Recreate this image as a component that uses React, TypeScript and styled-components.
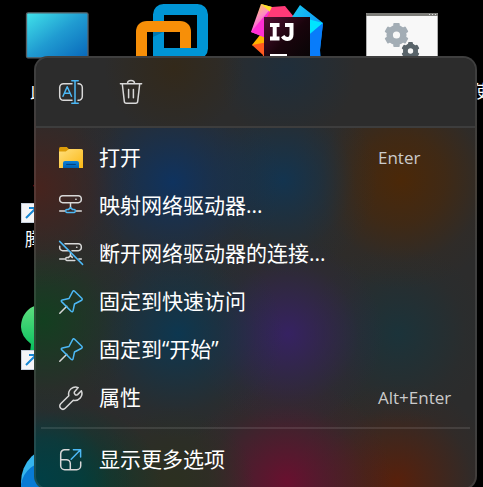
import React from "react";
import styled, { createGlobalStyle } from "styled-components";

const GlobalStyle = createGlobalStyle`
  *, *::before, *::after { box-sizing: border-box; }
  html, body { margin: 0; background: #000; }
  body { overflow: hidden; font-family: "Open Sans", "Noto Sans CJK SC", sans-serif; }
`;

const Desktop = styled.main`
  position: relative;
  min-height: 100vh;
  overflow: hidden;
  background: #000;
  color: #fff;
`;

const Shortcut = styled.div<{ $x: number; $y: number }>`
  position: absolute;
  left: ${(p) => p.$x}px;
  top: ${(p) => p.$y}px;
  width: 72px;
  display: flex;
  flex-direction: column;
  align-items: center;
  gap: 1px;
  svg { display: block; flex: none; overflow: visible; }
`;

const ShortcutLabel = styled.span`
  font-size: 18px;
  line-height: 24px;
  white-space: nowrap;
`;

const Menu = styled.div`
  position: absolute;
  left: 34px;
  right: 6px;
  top: 56px;
  overflow: hidden;
  border: 2px solid rgba(255, 255, 255, 0.09);
  border-radius: 14px;
  background:
    radial-gradient(circle 100px at 4px 132px, #48231df5, #48231d70 45%, #48231d18 75%, #48231d00),
    radial-gradient(circle 110px at 139px 126px, #0f335f, #0f335f80 42%, #0f335f1c 75%, #0f335f00),
    radial-gradient(circle 95px at 249px 124px, #13344f, #13344f80 42%, #13344f1c 75%, #13344f00),
    radial-gradient(circle 110px at 367px 124px, #4b2808, #4b2808a0 40%, #4b28081c 75%, #4b280800),
    radial-gradient(circle 95px at 9px 264px, #133f20, #133f2080 42%, #133f201c 75%, #133f2000),
    radial-gradient(circle 105px at 144px 278px, #0d3750, #0d375080 42%, #0d37501c 75%, #0d375000),
    radial-gradient(circle 95px at 254px 278px, #362262, #36226280 42%, #3622621c 75%, #36226200),
    radial-gradient(circle 90px at 364px 278px, #1b333a, #1b333a80 42%, #1b333a1c 75%, #1b333a00),
    radial-gradient(circle 95px at 4px 425px, #003f45, #003f45a0 45%, #003f451c 75%, #003f4500),
    radial-gradient(circle 80px at 48px 430px, #0b3a2c, #0b3a2c90 45%, #0b3a2c00),
    radial-gradient(circle 80px at 140px 430px, #2c3020, #2c302090 50%, #2c302000),
    radial-gradient(circle 105px at 253px 426px, #69102f, #69102f80 42%, #69102f1c 75%, #69102f00),
    radial-gradient(circle 100px at 363px 426px, #58200b, #58200b80 42%, #58200b1c 75%, #58200b00),
    #2c2c2c;
  background-origin: border-box;
`;

const Toolbar = styled.div`
  display: flex;
  gap: 12px;
  padding: 10px 11px;
  border-bottom: 2px solid #3d3d3d;
  background:
    radial-gradient(circle 70px at 138px 10px, #33291a, #33291a00),
    radial-gradient(circle 70px at 250px 12px, #1f2e3b, #1f2e3b00),
    #2c2c2c;
`;

const IconButton = styled.button`
  display: grid;
  place-items: center;
  width: 48px;
  height: 48px;
  padding: 0;
  border: 0;
  border-radius: 6px;
  background: transparent;
  &:hover { background: rgba(255, 255, 255, 0.08); }
`;

const Items = styled.div`
  display: flex;
  flex-direction: column;
  padding: 6px 5px 4px;
`;

const Item = styled.button`
  display: grid;
  grid-template-columns: 24px 1fr 92px;
  column-gap: 16px;
  align-items: center;
  height: 48px;
  padding: 0 0 0 18px;
  border: 0;
  border-radius: 6px;
  background: transparent;
  color: #fff;
  font: inherit;
  font-size: 21px;
  line-height: 28px;
  text-align: left;
  white-space: nowrap;
  &:hover { background: rgba(255, 255, 255, 0.08); }
`;

const ItemLabel = styled.span`
  padding-bottom: 2px;
`;

const Keys = styled.kbd`
  font-family: "Open Sans", sans-serif;
  font-size: 17px;
  line-height: 24px;
  color: #cbcbcb;
`;

const Divider = styled.hr`
  width: 100%;
  height: 2px;
  margin: 5px 0 7px;
  border: 0;
  background: rgba(255, 255, 255, 0.1);
`;

const Glyph = styled.svg`
  display: block;
  width: 24px;
  height: 24px;
  overflow: visible;
  fill: none;
  stroke: #d8d8d8;
  stroke-width: 1.5;
  stroke-linecap: round;
  stroke-linejoin: round;
  .accent { stroke: #4cb8f5; }
`;

const RenameIcon = () => (
  <Glyph viewBox="0 0 24 24" aria-hidden="true">
    <path d="M13 3.7H4.5A3.8 3.8 0 0 0 .7 7.5v9a3.8 3.8 0 0 0 3.8 3.8H13M19 3.7h.5a3.8 3.8 0 0 1 3.8 3.8v9a3.8 3.8 0 0 1-3.8 3.8H19" />
    <path className="accent" d="M4 16.2 8.2 6.7l4.3 9.5M5.4 13.2h5.6M16 .8v22.5M12.8.8h6.4M12.8 23.3h6.4" />
  </Glyph>
);

const DeleteIcon = () => (
  <Glyph viewBox="0 0 24 24" aria-hidden="true">
    <path d="M1.4 3.8h21.2M8.5 3.4a3.5 3 0 0 1 7 0M3.3 4l2 17.3a2 2 0 0 0 2 1.9h9.4a2 2 0 0 0 2-1.9L20.7 4M9.6 9.5v8.2M14.4 9.5v8.2" />
  </Glyph>
);

const FolderIcon = () => (
  <Glyph viewBox="0 0 24 24" aria-hidden="true">
    <defs>
      <linearGradient id="folder" x1="0" y1="0" x2="1" y2="1">
        <stop offset="0" stopColor="#ffdf7d" />
        <stop offset="1" stopColor="#fbb814" />
      </linearGradient>
      <linearGradient id="folderBase" x1="0" y1="0" x2="0" y2="1">
        <stop offset="0" stopColor="#0d80d8" />
        <stop offset="1" stopColor="#0061b3" />
      </linearGradient>
    </defs>
    <g stroke="none">
      <path fill="#dd9c08" d="M0 3q0-2 1.5-2h6.3l2 2H22v3H0z" />
      <path fill="url(#folder)" d="M0 5.6h6.8L10 3h12.5Q24 3 24 4.5V22H0z" />
      <path fill="url(#folderBase)" d="M4 22v-5q0-2 2-2h12q2 0 2 2v5z" />
    </g>
    <path d="M7.6 18.4h8.8" stroke="#063e78" strokeWidth="1" />
  </Glyph>
);

const MapDriveIcon = () => (
  <Glyph viewBox="0 0 24 24" aria-hidden="true">
    <path d="M3.7 1.7h15.6a3 3 0 0 1 3 3v1a3 3 0 0 1-3 3H3.7a3 3 0 0 1-3-3v-1a3 3 0 0 1 3-3zM16.8 5.2h.3M11.5 9v4.5M.7 17h5M17.3 17h5" />
    <path className="accent" d="M9.3 15.6 11.5 13.6l2.2 2h1.6q1 0 1 1.4t-1 1.4H7.7q-1 0-1-1.4t1-1.4z" />
  </Glyph>
);

const DisconnectDriveIcon = () => (
  <Glyph viewBox="0 0 24 24" aria-hidden="true">
    <path d="M6 1.7h13.3a3 3 0 0 1 3 3v1a3 3 0 0 1-3 3H13M9.4 8.7H3.7a3 3 0 0 1-3-3V4.2M17.6 5.2h.3M11.5 10.500v3M.7 17h5M9.3 15.6l2.2-2 1.8 1.8M15.8 18.4H7.7q-1 0-1-1.4t1-1.4h1.6M19.8 17h2.5" />
    <path className="accent" d="m.6-.6 23 23" />
  </Glyph>
);

const PinIcon = () => (
  <Glyph viewBox="0 0 24 24" aria-hidden="true">
    <path d="m.8 23.2 7-7" />
    <path className="accent" d="M15.6 1.2 22.8 8.3q1.1 1.3-.6 2.2l-6.7 3.5-1.4 6.6q-.5 2-2 .6L2.8 11.9q-1.3-1.4.6-2l6.6-1.4 3.5-6.7q.9-1.7 2.1-.6z" />
  </Glyph>
);

const WrenchIcon = () => (
  <Glyph viewBox="0 0 24 24" aria-hidden="true">
    <path d="M19.2 1.6A7 7 0 0 0 9.8 9.7L1.7 17.8a3 3 0 0 0 4.5 4.5l8.1-8.1a7 7 0 0 0 8.1-9.4l-3.8 3.8q-1.5 1-2.6-.2-1.2-1.2-.6-2.5z" />
  </Glyph>
);

const MoreIcon = () => (
  <Glyph viewBox="0 0 24 24" aria-hidden="true">
    <path d="M10 1.700H5.700a4 4 0 0 0-4 4v12a4 4 0 0 0 4 4h12a4 4 0 0 0 4-4V14M1.700 11.700h5.600a4 4 0 0 1 4 4v6" />
    <path className="accent" d="m12.200 11.200 9.300-9.400M14.400 1.700h7.200v7.200" />
  </Glyph>
);

const MonitorArt = () => (
  <svg width="64" height="66" viewBox="0 0 64 66" aria-hidden="true">
    <defs>
      <linearGradient id="screen" x1="0" y1="0" x2="1" y2="1">
        <stop offset="0" stopColor="#41e3ea" />
        <stop offset=".5" stopColor="#209bd1" />
        <stop offset="1" stopColor="#0867ba" />
      </linearGradient>
    </defs>
    <rect x="1.500" y=".8" width="61.500" height="45" rx="1.5" fill="url(#screen)" stroke="#596066" strokeWidth="1.3" />
  </svg>
);

const BoxesArt = () => (
  <svg width="72" height="72" viewBox="0 0 72 72" aria-hidden="true">
    <rect x="22.5" y="5.5" width="44" height="44" rx="5" fill="none" stroke="#0095d5" strokeWidth="11" />
    <path fill="none" stroke="#f78f08" strokeWidth="11" d="M5.5 66V28q0-5.500 5.500-5.500h33q5.500 0 5.500 5.500v16" />
    <path fill="#0095d5" d="M17 44h44v11H17z M17 28h11v16H17z" />
    <path fill="#0077ae" d="M17 28h10.500L17 33z" />
  </svg>
);

const IdeaArt = () => (
  <svg width="72" height="72" viewBox="0 0 72 72" aria-hidden="true">
    <defs>
      <linearGradient id="ideaPink" x1="0" y1="0" x2=".4" y2="1">
        <stop offset="0" stopColor="#ffd93b" />
        <stop offset=".45" stopColor="#ff8fc0" />
        <stop offset="1" stopColor="#f629e9" />
      </linearGradient>
      <linearGradient id="ideaBlue" x1="0" y1="0" x2="1" y2="1">
        <stop offset="0" stopColor="#18c9f1" />
        <stop offset="1" stopColor="#087cfa" />
      </linearGradient>
      <linearGradient id="ideaDark" x1="0" y1="0" x2="1" y2="1">
        <stop offset="0" stopColor="#531034" />
        <stop offset=".5" stopColor="#19040c" />
        <stop offset="1" stopColor="#050505" />
      </linearGradient>
    </defs>
    <path fill="#ffb300" d="m1 41 8-10 6 2v16z" />
    <path fill="#ff5a20" d="m1 41 16-3v26L11 56l1-5z" />
    <path fill="url(#ideaPink)" d="m10 0 11 3-6 31L0 28z" />
    <path fill="#ff2ed3" d="m0 28 21-25 4 34-11-4z" />
    <path fill="#ffdf28" d="M10 0 21 3 19 8z" />
    <path fill="#ff3b78" d="m21 3 13-1 9 11-4 8-25-4z" />
    <path fill="url(#ideaBlue)" d="M49 1 72 19l-3 27 1 18H45L41 13z" />
    <path fill="#00e5ff" d="m49 13 23 6-17 14z" />
    <path fill="#087cfa" d="m58 31 14-12-3 27 1 18H56z" />
    <rect x="13" y="13" width="46" height="46" fill="url(#ideaDark)" />
    <path fill="none" stroke="#fff" strokeWidth="4" d="M19 21h9.500M23.700 20v16M19 34.500h9.500M34 21h6.500v9.500q0 4.500-4 4.500-3 0-4.800-2.800" />
    <path fill="#fff" d="M19 50h17v3H19z" />
  </svg>
);

const gearTeeth = [0, 60, 120, 180, 240, 300];

const Gear = ({ x, y, r, color }: { x: number; y: number; r: number; color: string }) => (
  <g transform={`translate(${x} ${y})`}>
    <circle r={r * 0.57} fill="none" stroke={color} strokeWidth={r * 0.54} />
    {gearTeeth.map((a) => (
      <rect key={a} x={-r * 0.27} y={-r} width={r * 0.54} height={r * 0.4} rx="1" fill={color} transform={`rotate(${a})`} />
    ))}
  </g>
);

const GearWindowArt = () => (
  <svg width="72" height="64" viewBox="0 0 72 64" aria-hidden="true">
    <rect width="72" height="60" rx="1" fill="#f8f8f8" />
    <path fill="#7d7d79" d="M0 1q0-1 1-1h70q1 0 1 1v2H0z" />
    <path fill="#d8d8d8" d="M63 1h1v1h-1zM66 1h1v1h-1zM69 1h1v1h-1z" />
    <path fill="none" stroke="#b0b0b0" d="M.5 3v57M71.500 3v57" />
    <Gear x={30.5} y={22} r={12} color="#a3adb5" />
    <Gear x={44.5} y={38} r={9} color="#59646a" />
  </svg>
);

const Badge = () => (
  <g>
    <rect x=".5" y="37.500" width="20" height="19" fill="#f4f5f8" stroke="#c5cedb" />
    <path d="m5 52 9-9M8 42h8v8" fill="none" stroke="#1686d3" strokeWidth="2" />
  </g>
);

const PenguinArt = () => (
  <svg width="72" height="60" viewBox="0 0 72 60" aria-hidden="true">
    <path fill="#d91424" d="M12 20q4-4 15-3v8z" />
    <Badge />
  </svg>
);

const ChatArt = () => (
  <svg width="72" height="60" viewBox="0 0 72 60" aria-hidden="true">
    <defs>
      <linearGradient id="chat" x1="0" y1="0" x2="0" y2="1">
        <stop offset="0" stopColor="#62df80" />
        <stop offset="1" stopColor="#05bf5d" />
      </linearGradient>
    </defs>
    <path fill="url(#chat)" d="M24-9C8-9 0 2 0 14q0 9 10 17l-1 8 12-5q22 4 28-19Q48-9 24-9z" />
    <Badge />
  </svg>
);

const BrowserArt = () => (
  <svg width="72" height="72" viewBox="0 0 72 72" aria-hidden="true">
    <circle cx="36" cy="36" r="36" fill="#35b5ed" />
    <path fill="#087bd4" d="M0 38q4-20 28-23v57Q2 66 0 38z" />
  </svg>
);

const entries = [
  { label: "打开", icon: <FolderIcon />, keys: "Enter" },
  { label: "映射网络驱动器...", icon: <MapDriveIcon /> },
  { label: "断开网络驱动器的连接...", icon: <DisconnectDriveIcon /> },
  { label: "固定到快速访问", icon: <PinIcon /> },
  { label: "固定到“开始”", icon: <PinIcon /> },
  { label: "属性", icon: <WrenchIcon />, keys: "Alt+Enter" },
];

export default function App() {
  return (
    <Desktop>
      <GlobalStyle />
      <Shortcut $x={21} $y={12}><MonitorArt /><ShortcutLabel>此电脑</ShortcutLabel></Shortcut>
      <Shortcut $x={136} $y={4}><BoxesArt /></Shortcut>
      <Shortcut $x={251} $y={4}><IdeaArt /></Shortcut>
      <Shortcut $x={366} $y={13}><GearWindowArt /></Shortcut>
      <Shortcut $x={481} $y={79}><ShortcutLabel>使用说明书</ShortcutLabel></Shortcut>
      <Shortcut $x={21} $y={166}><PenguinArt /><ShortcutLabel>腾讯QQ</ShortcutLabel></Shortcut>
      <Shortcut $x={21} $y={313}><ChatArt /></Shortcut>
      <Shortcut $x={21} $y={446}><BrowserArt /></Shortcut>

      <Menu role="menu">
        <Toolbar>
          <IconButton type="button" aria-label="重命名"><RenameIcon /></IconButton>
          <IconButton type="button" aria-label="删除"><DeleteIcon /></IconButton>
        </Toolbar>
        <Items>
          {entries.map((e) => (
            <Item key={e.label} type="button" role="menuitem">
              {e.icon}
              <ItemLabel>{e.label}</ItemLabel>
              {e.keys && <Keys>{e.keys}</Keys>}
            </Item>
          ))}
          <Divider />
          <Item type="button" role="menuitem">
            <MoreIcon />
            <ItemLabel>显示更多选项</ItemLabel>
          </Item>
        </Items>
      </Menu>
    </Desktop>
  );
}
